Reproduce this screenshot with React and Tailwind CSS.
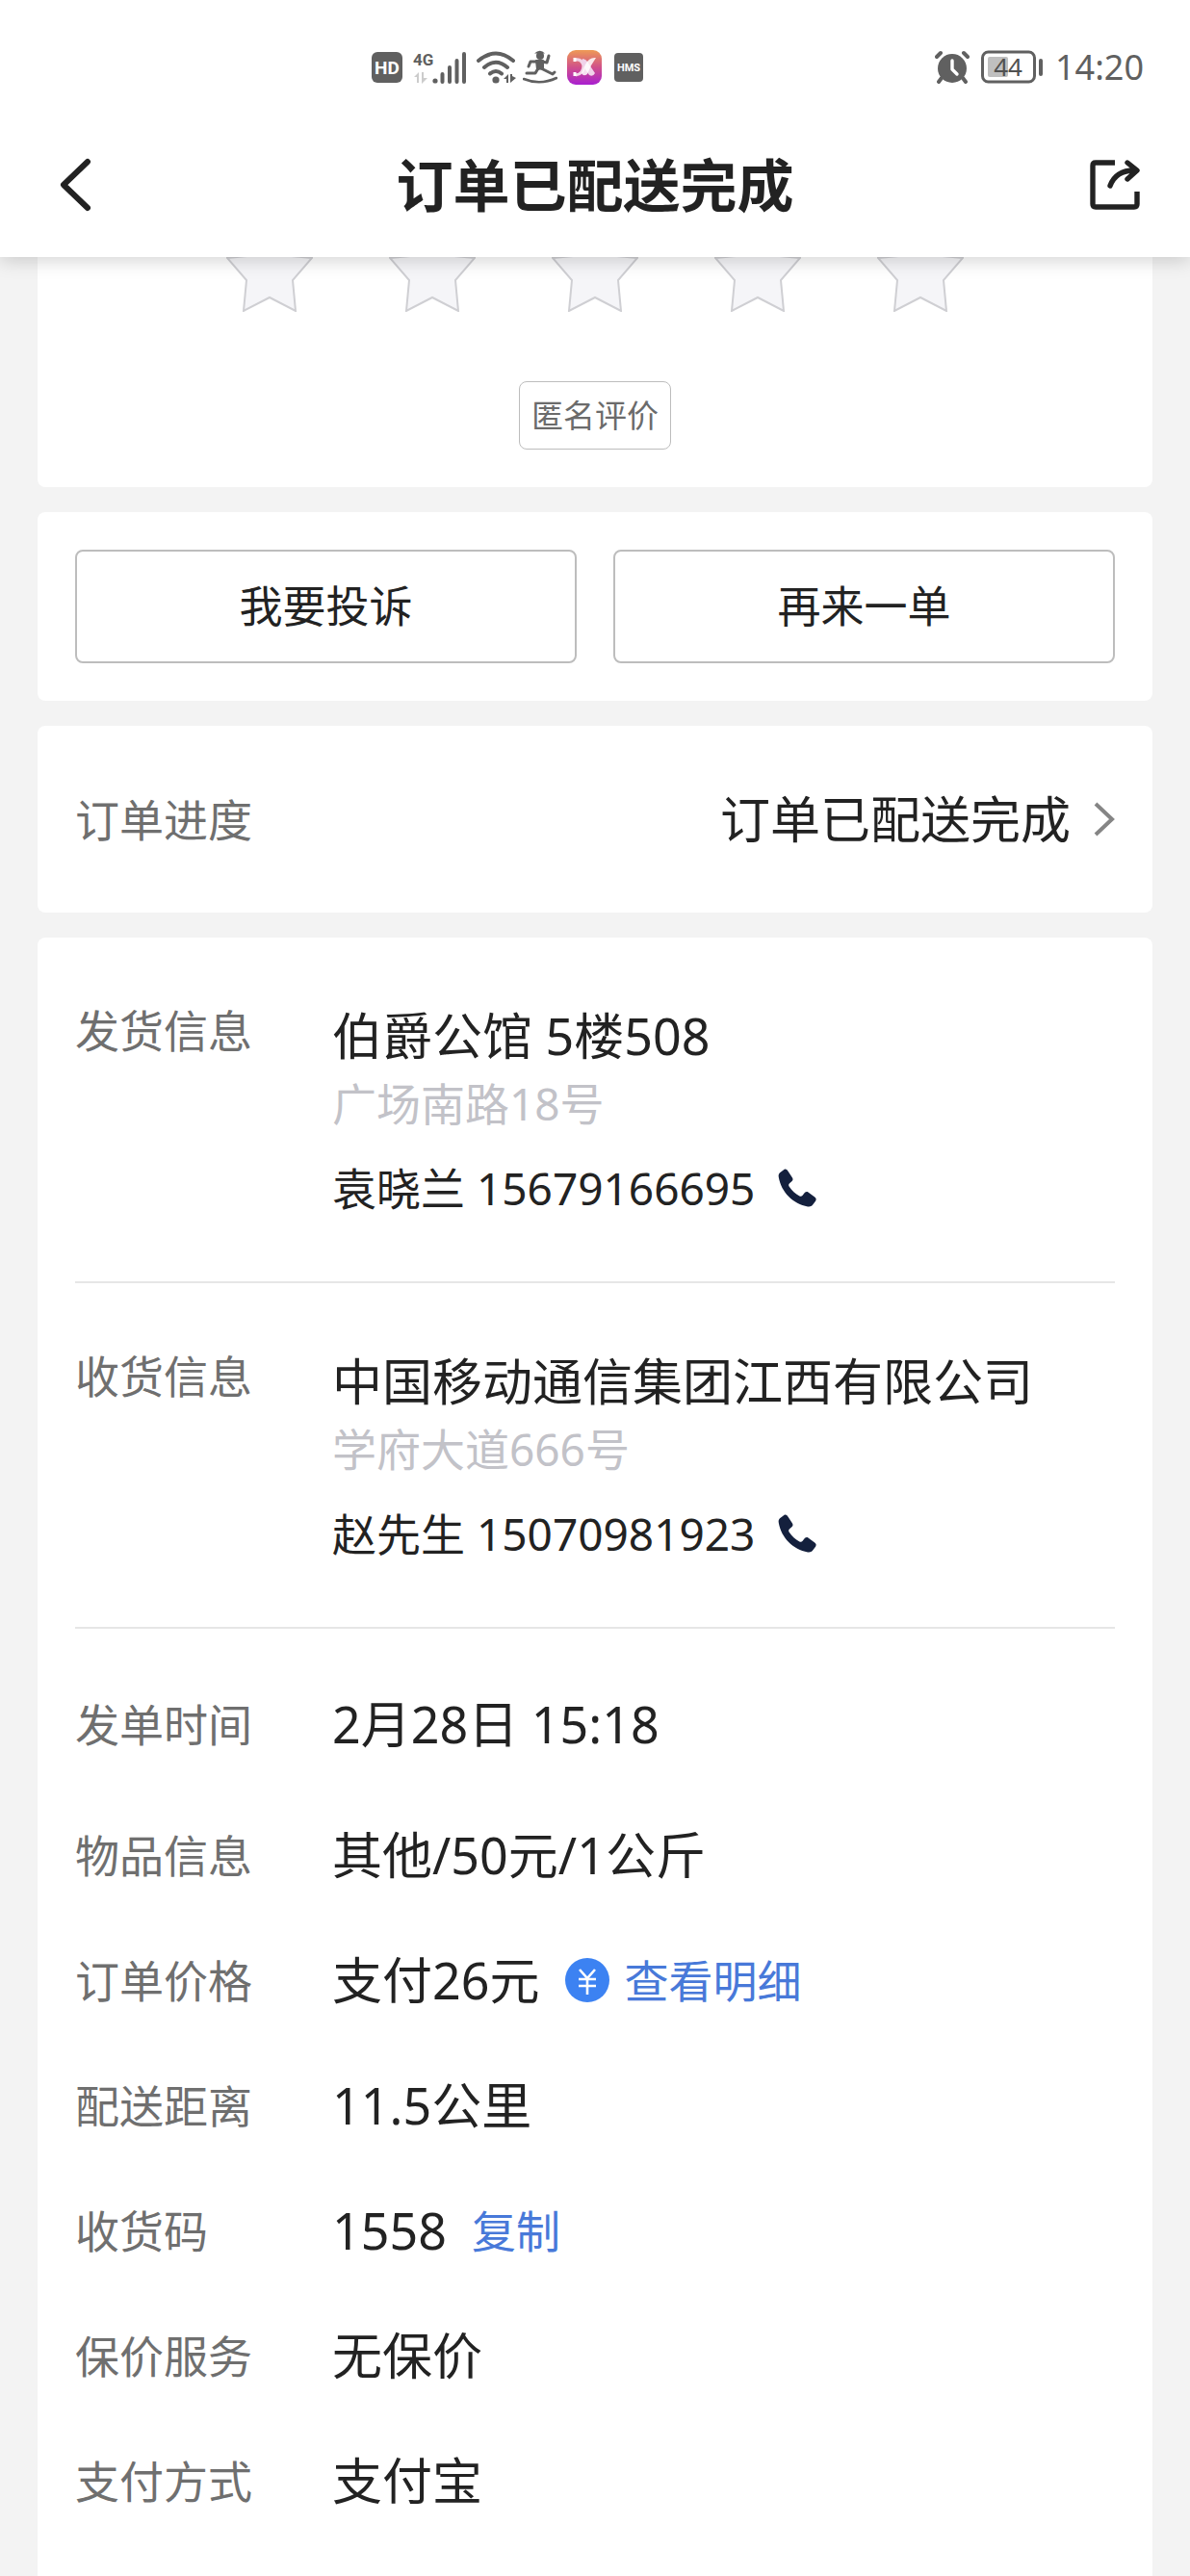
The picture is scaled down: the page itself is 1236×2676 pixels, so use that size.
import React, { useState } from "react";

const ADDRESSES = [
  {
    label: "发货信息",
    place: "伯爵公馆 5楼508",
    street: "广场南路18号",
    name: "袁晓兰",
    phone: "15679166695",
  },
  {
    label: "收货信息",
    place: "中国移动通信集团江西有限公司",
    street: "学府大道666号",
    name: "赵先生",
    phone: "15070981923",
  },
];

const PICKUP_CODE = "1558";

function App() {
  const [rating, setRating] = useState(0);

  const handleCopy = () => {
    navigator.clipboard?.writeText(PICKUP_CODE);
  };

  return (
    <div className="flex min-h-screen flex-col bg-[#f3f3f3] font-['Noto_Sans','Noto_Sans_CJK_SC',sans-serif] text-[#222222]">
      <header className="sticky top-0 z-10 bg-white pt-[52px] pb-[45px] shadow-[0_2px_20px_rgba(0,0,0,0.2)]">
        <StatusBar />
        <div className="mt-[74px] flex items-center justify-between pr-[52px] pl-[60px]">
          <button type="button" aria-label="返回" className="w-11">
            <svg viewBox="0 0 36 56" className="h-[56px] w-[36px]" fill="none">
              <path
                d="M31 4 L6 28 L31 52"
                stroke="#222222"
                strokeWidth="6"
                strokeLinecap="round"
                strokeLinejoin="round"
              />
            </svg>
          </button>
          <h1 className="text-[59px] leading-[60px] font-bold">
            订单已配送完成
          </h1>
          <button type="button" aria-label="分享">
            <svg viewBox="0 0 52 52" className="h-[52px] w-[52px]" fill="none">
              <g stroke="#222222" strokeWidth="5.4">
                <path d="M26 3 H6 Q3 3 3 6 V46 Q3 49 6 49 H46 Q49 49 49 46 V33" />
                <path
                  d="M21 27 Q27 11 46 11 M39 3 L49 11 L39 20"
                  strokeLinecap="round"
                  strokeLinejoin="round"
                />
              </g>
            </svg>
          </button>
        </div>
      </header>

      <main className="flex flex-1 flex-col gap-[26px] px-[39px]">
        {/* the rating card is scrolled partly under the header */}
        <section className="-mt-[60px] flex flex-col items-center rounded-lg bg-white pt-[27px] pb-[39px]">
          <div className="flex gap-[79px]">
            {[1, 2, 3, 4, 5].map((value) => (
              <button
                key={value}
                type="button"
                aria-label={`${value}星`}
                onClick={() => setRating(value)}
              >
                <Star active={value <= rating} />
              </button>
            ))}
          </div>
          <button
            type="button"
            className="mt-[72px] rounded-lg border border-[#bdbdbd] px-3 py-3 text-[33px] leading-[45px] text-[#6b6b6b]"
          >
            匿名评价
          </button>
        </section>

        <section className="flex gap-[38px] rounded-lg bg-white p-[39px]">
          <ActionButton>我要投诉</ActionButton>
          <ActionButton>再来一单</ActionButton>
        </section>

        <section className="rounded-lg bg-white">
          <button
            type="button"
            className="flex w-full items-center justify-between px-[39px] py-[67px]"
          >
            <span className="text-[46px] leading-[60px] text-[#6f6f6f]">
              订单进度
            </span>
            <span className="flex items-center gap-6 text-[52px] leading-[60px]">
              订单已配送完成
              <svg viewBox="0 0 22 36" className="h-9 w-[22px]" fill="none">
                <path d="M2 2 L19 18 L2 34" stroke="#858585" strokeWidth="4" />
              </svg>
            </span>
          </button>
        </section>

        <section className="flex-1 rounded-t-lg bg-white px-[39px] pb-8">
          {ADDRESSES.map((item) => (
            <Address key={item.label} {...item} />
          ))}
          <dl className="pt-[34px]">
            <div className="mb-1.5">
              <Row label="发单时间">2月28日 15:18</Row>
            </div>
            <Row label="物品信息">其他/50元/1公斤</Row>
            <Row label="订单价格">
              支付26元
              <button
                type="button"
                className="ml-[26px] flex items-center gap-4 text-[46px] text-[#4879d9]"
              >
                <YuanIcon />
                查看明细
              </button>
            </Row>
            <Row label="配送距离">11.5公里</Row>
            <Row label="收货码">
              {PICKUP_CODE}
              <button
                type="button"
                onClick={handleCopy}
                className="ml-[26px] text-[46px] text-[#4879d9]"
              >
                复制
              </button>
            </Row>
            <Row label="保价服务">无保价</Row>
            <Row label="支付方式">支付宝</Row>
          </dl>
        </section>
      </main>
    </div>
  );
}

export default App;

function ActionButton({ children }) {
  return (
    <button
      type="button"
      className="flex-1 rounded-lg border-2 border-[#bdbdbd] py-[27px] text-[45px] leading-[60px]"
    >
      {children}
    </button>
  );
}

function Address({ label, place, street, name, phone }) {
  return (
    <div className="flex border-b-2 border-[#e6e6e6] pt-[66px] pb-[63px]">
      <h2 className="w-[267px] shrink-0 text-[46px] leading-[60px] text-[#6f6f6f]">
        {label}
      </h2>
      <div>
        <p className="pt-0.5 text-[52px] leading-[68px]">{place}</p>
        <p className="mt-0.5 text-[46px] leading-[68px] text-[#c2c2c8]">
          {street}
        </p>
        <p className="mt-5 flex items-center gap-6 text-[46px] leading-[68px]">
          {name} {phone}
          <a href={`tel:${phone}`} aria-label="拨打电话">
            <svg viewBox="0 0 40 40" className="h-10 w-10" fill="#14203d">
              <path d="M7 0.6 C8.4 0.2 9.5 1 10.4 2.6 L15 9.4 C15.8 10.8 15.6 12 14.6 13 L11.8 15.4 C11 16.2 11 17.2 11.6 18.4 C14.4 22.6 18 26 22.4 28.4 C23.6 29 24.6 29 25.4 28 L28 24.8 C29 23.8 30.2 23.6 31.4 24.4 L38.2 29.6 C39.8 30.8 40 32 39.2 33.4 L36 37.8 C34.8 39.2 33.2 39.8 31 39.4 C16 36.8 3.4 24.4 0.8 9 C0.4 6.8 0.8 5.4 2 4.2 Z" />
            </svg>
          </a>
        </p>
      </div>
    </div>
  );
}

function Row({ label, children }) {
  return (
    <div className="flex items-center py-[31px] leading-[68px]">
      <dt className="w-[267px] shrink-0 text-[46px] text-[#6f6f6f]">{label}</dt>
      <dd className="flex items-center text-[52px]">{children}</dd>
    </div>
  );
}

function Star({ active }) {
  return (
    <svg viewBox="0 0 90 90" className="h-[90px] w-[90px]">
      <path
        d="M45 2 L58 31 L89 34 L69 57 L72 89 L45 75 L18 89 L21 57 L1 34 L32 31 Z"
        fill={active ? "#ffc63d" : "#f5f5f8"}
        stroke="#cfcfd3"
        strokeWidth="2"
      />
    </svg>
  );
}

function YuanIcon() {
  return (
    <svg viewBox="0 0 46 46" className="h-[46px] w-[46px]" fill="none">
      <circle cx="23" cy="23" r="23" fill="#3c82f2" />
      <path
        d="M15 12 L23 21 L31 12 M14 22 H32 M14 29 H32 M23 21 V38"
        stroke="#ffffff"
        strokeWidth="2.6"
      />
    </svg>
  );
}

function StatusBar() {
  return (
    <div className="flex h-9 items-center justify-between pr-[48px] pl-[386px]">
      <div className="flex items-center">
        <svg viewBox="0 0 32 32" className="h-8 w-8">
          <rect width="32" height="32" rx="6" fill="#606060" />
          <text
            x="16"
            y="23"
            textAnchor="middle"
            className="font-['Roboto',sans-serif] text-[19px] font-bold"
            fill="#ffffff"
          >
            HD
          </text>
        </svg>

        {/* cellular */}
        <svg
          viewBox="0 0 56 36"
          className="ml-[11px] h-9 w-[56px] overflow-visible"
        >
          <text
            x="0"
            y="16"
            className="font-['Roboto',sans-serif] text-[17px] font-bold"
            fill="#606060"
          >
            4G
          </text>
          <path
            d="M1 28 L6 23 V34 H4 V28 Z M9 23 H11 V29 L15 29 L9 35 Z"
            fill="#cccccc"
          />
          <circle cx="23" cy="32" r="2.6" fill="#606060" />
          <path
            d="M30.5 25 V33 M38 18 V33 M45.5 11 V33 M53 4 V33"
            stroke="#606060"
            strokeWidth="4"
            strokeLinecap="round"
          />
        </svg>

        {/* wifi */}
        <svg viewBox="0 0 42 36" className="ml-[10px] h-9 w-[42px]">
          <g fill="none" stroke="#606060" strokeWidth="4" strokeLinecap="round">
            <path d="M2 11 Q20 -4 38 11" />
            <path d="M8 18 Q20 7.5 32 18" />
            <path d="M14 24.5 Q20 19.5 26 24.5" />
          </g>
          <circle cx="20" cy="31" r="3.6" fill="#606060" />
          <path
            d="M28 30 L33 25 V34 H31 V30 Z M35 25 H37 V27 L41 29 L35 34 Z"
            fill="#606060"
          />
        </svg>

        {/* step counter */}
        <svg viewBox="0 0 36 36" className="ml-[6px] h-9 w-9">
          <circle cx="18" cy="6" r="4" fill="#606060" />
          <path d="M12 3.6 Q18 -2 23 3.6 Z" fill="#606060" />
          <path
            d="M14 11 L21 11 L21 19 L15 20 Z"
            fill="#606060"
            stroke="#606060"
            strokeWidth="2"
            strokeLinejoin="round"
          />
          <g
            fill="none"
            stroke="#606060"
            strokeWidth="3"
            strokeLinecap="round"
            strokeLinejoin="round"
          >
            <path d="M15 12 L8 12 L6 17" />
            <path d="M20 12 L25 13 L27 6" />
            <path d="M16 19 L13 24 L4 24" />
            <path d="M19 19 L25 22 L31 25 L33 23" />
          </g>
          <path
            d="M1 30 Q18 37 35 29"
            fill="none"
            stroke="#606060"
            strokeWidth="2.6"
            strokeLinecap="round"
          />
        </svg>

        {/* dx app */}
        <svg viewBox="0 0 36 36" className="ml-[10px] h-9 w-9">
          <defs>
            <linearGradient id="dx" x1="0" y1="0" x2="0" y2="1">
              <stop offset="0" stopColor="#ee9a55" />
              <stop offset="0.5" stopColor="#d0508a" />
              <stop offset="1" stopColor="#a81fd0" />
            </linearGradient>
          </defs>
          <rect width="36" height="36" rx="9" fill="url(#dx)" />
          <path
            d="M9 10 Q15 9 17 16 Q17 25 9 26"
            fill="none"
            stroke="#f3d5e6"
            strokeWidth="3"
          />
          <path d="M8 8 V12 M8 23 V27" stroke="#fff" strokeWidth="3" />
          <path
            d="M16 9 Q20 9 23 15 L29 24 Q27 28 23 26 L15 14 Z"
            fill="#f0d3ea"
          />
          <path
            d="M30 8 Q23 7 19 15 L15 24 Q17 28 21 25 L25 16 Z"
            fill="#ffffff"
            opacity="0.85"
          />
        </svg>

        <svg viewBox="0 0 32 32" className="ml-[12px] h-8 w-8">
          <rect x="1" y="1" width="30" height="30" rx="4" fill="#606060" />
          <text
            x="16"
            y="20"
            textAnchor="middle"
            className="font-['Roboto',sans-serif] text-[11px] font-bold"
            fill="#ffffff"
          >
            HMS
          </text>
        </svg>
      </div>

      <div className="flex items-center text-[#606060]">
        {/* alarm */}
        <svg viewBox="0 0 36 36" className="h-9 w-9">
          <circle cx="18" cy="19" r="15" fill="#606060" />
          <path
            d="M2 7 L6 3 M34 7 L30 3 M7 29 L4 33 M29 29 L32 33"
            stroke="#606060"
            strokeWidth="4"
            strokeLinecap="round"
          />
          <path
            d="M18 11 V20 L23 25"
            fill="none"
            stroke="#ffffff"
            strokeWidth="3.4"
            strokeLinecap="round"
            strokeLinejoin="round"
          />
        </svg>

        {/* battery */}
        <svg viewBox="0 0 66 36" className="ml-[12px] h-9 w-[66px]">
          <rect
            x="1.5"
            y="2"
            width="54"
            height="31"
            rx="6"
            fill="none"
            stroke="#606060"
            strokeWidth="3"
          />
          <rect x="7" y="7" width="21" height="21" rx="2" fill="#bfbfbf" />
          <rect x="60" y="9" width="4" height="18" rx="2" fill="#606060" />
          <text
            x="28"
            y="27"
            textAnchor="middle"
            className="text-[26px]"
            fill="#505050"
          >
            44
          </text>
        </svg>

        <span className="ml-[11px] text-[36px] leading-9">14:20</span>
      </div>
    </div>
  );
}
